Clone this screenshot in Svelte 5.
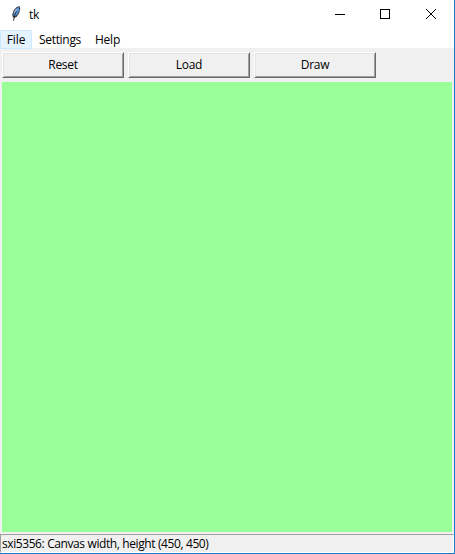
<script>
  const menus = [
    { label: 'File', width: 32, spacing: -0.1 },
    { label: 'Settings', width: 56, spacing: -0.3 },
    { label: 'Help', width: 39, spacing: -0.2 }
  ];
  const buttons = ['Reset', 'Load', 'Draw'];
  let active = $state('File');
</script>

<div class="window">
  <header>
    <svg class="feather" width="12" height="18" viewBox="0 0 12 18">
      <path d="M3 12.5 L2.3 9.5 L3.8 5 L6.8 1.9 L9.3 1 L10.2 3.5 L9.2 8 L7 11.2 L4.5 13 Z" fill="#2c3038" />
      <path d="M3.7 11.3 L3.4 8.8 L4.9 5 L8.6 1.8 L9.3 4.5 L8 8.2 L5.5 11.3Z" fill="#5b9be0" />
      <path d="M3.6 8.5 L5 5 L7.4 3 L5.2 7.5Z" fill="#a4b4c6" />
      <path d="M6.5 6.5 L5 9.5 L3.5 15.7" fill="none" stroke="#1d2026" stroke-width="0.9" />
    </svg>
    <span class="title">tk</span>
    <div class="controls">
      <svg width="46" height="29" shape-rendering="crispEdges"><path d="M11 14.5h10" stroke="#000" /></svg>
      <svg width="46" height="29" shape-rendering="crispEdges"><rect x="10.5" y="9.5" width="9" height="9" fill="none" stroke="#000" /></svg>
      <svg width="38" height="29"><path d="M10 9l10 10M20 9l-10 10" stroke="#000" stroke-width="1" /></svg>
    </div>
  </header>
  <nav>
    {#each menus as m}
      <button class="menu" class:active={active === m.label} style:width="{m.width}px" style:letter-spacing="{m.spacing}px" onclick={() => (active = m.label)}>{m.label}</button>
    {/each}
  </nav>
  <div class="tools">
    {#each buttons as label}
      <button class="tool">{label}</button>
    {/each}
  </div>
  <div class="canvas"></div>
  <footer>sxi5356: Canvas width, height (450, 450)</footer>
</div>

<style>
  .window {
    box-sizing: border-box;
    width: 455px;
    height: 554px;
    display: flex;
    flex-direction: column;
    background: #f0f0f0;
    border-right: 1px solid #1979ca;
    border-bottom: 1px solid #1979ca;
    font: 12px 'Open Sans', 'Noto Sans', sans-serif;
    color: #000;
    overflow: hidden;
  }
  header {
    display: flex;
    height: 30px;
    flex: none;
    background: #fff;
  }
  .feather { margin: 5px 0 0 10px; }
  .title { margin-left: 7px; line-height: 30px; letter-spacing: -0.2px; }
  .controls { display: flex; margin-left: auto; }
  .controls svg { display: block; }
  nav {
    display: flex;
    height: 18px;
    flex: none;
    background: #fff;
  }
  button {
    box-sizing: border-box;
    margin: 0;
    padding: 0;
    font: inherit;
    color: inherit;
    white-space: nowrap;
  }
  .menu {
    height: 19px;
    border: 1px solid transparent;
    background: none;
    line-height: 18px;
    position: relative;
  }
  .menu.active { background: #e5f3ff; border-color: #cce8ff; }
  .tools {
    display: flex;
    flex: none;
    gap: 4px;
    height: 34px;
    padding: 4px 2px;
    box-sizing: border-box;
  }
  .tool {
    width: 122px;
    height: 26px;
    border: 1px solid;
    border-color: #fff #696969 #696969 #fff;
    box-shadow: inset 1px 1px #e3e3e3, inset -1px -1px #a0a0a0;
    background: #f0f0f0;
    line-height: 24px;
    letter-spacing: -0.3px;
  }
  .canvas {
    width: 450px;
    height: 450px;
    flex: none;
    margin-left: 2px;
    background: #99ff99;
  }
  footer {
    box-sizing: border-box;
    height: 19px;
    margin-top: 2px;
    flex: none;
    border: 1px solid;
    border-color: #a0a0a0 #fff #fff #a0a0a0;
    padding-left: 1px;
    line-height: 18px;
    letter-spacing: -0.42px;
    word-spacing: 0.2px;
    white-space: nowrap;
  }
</style>
